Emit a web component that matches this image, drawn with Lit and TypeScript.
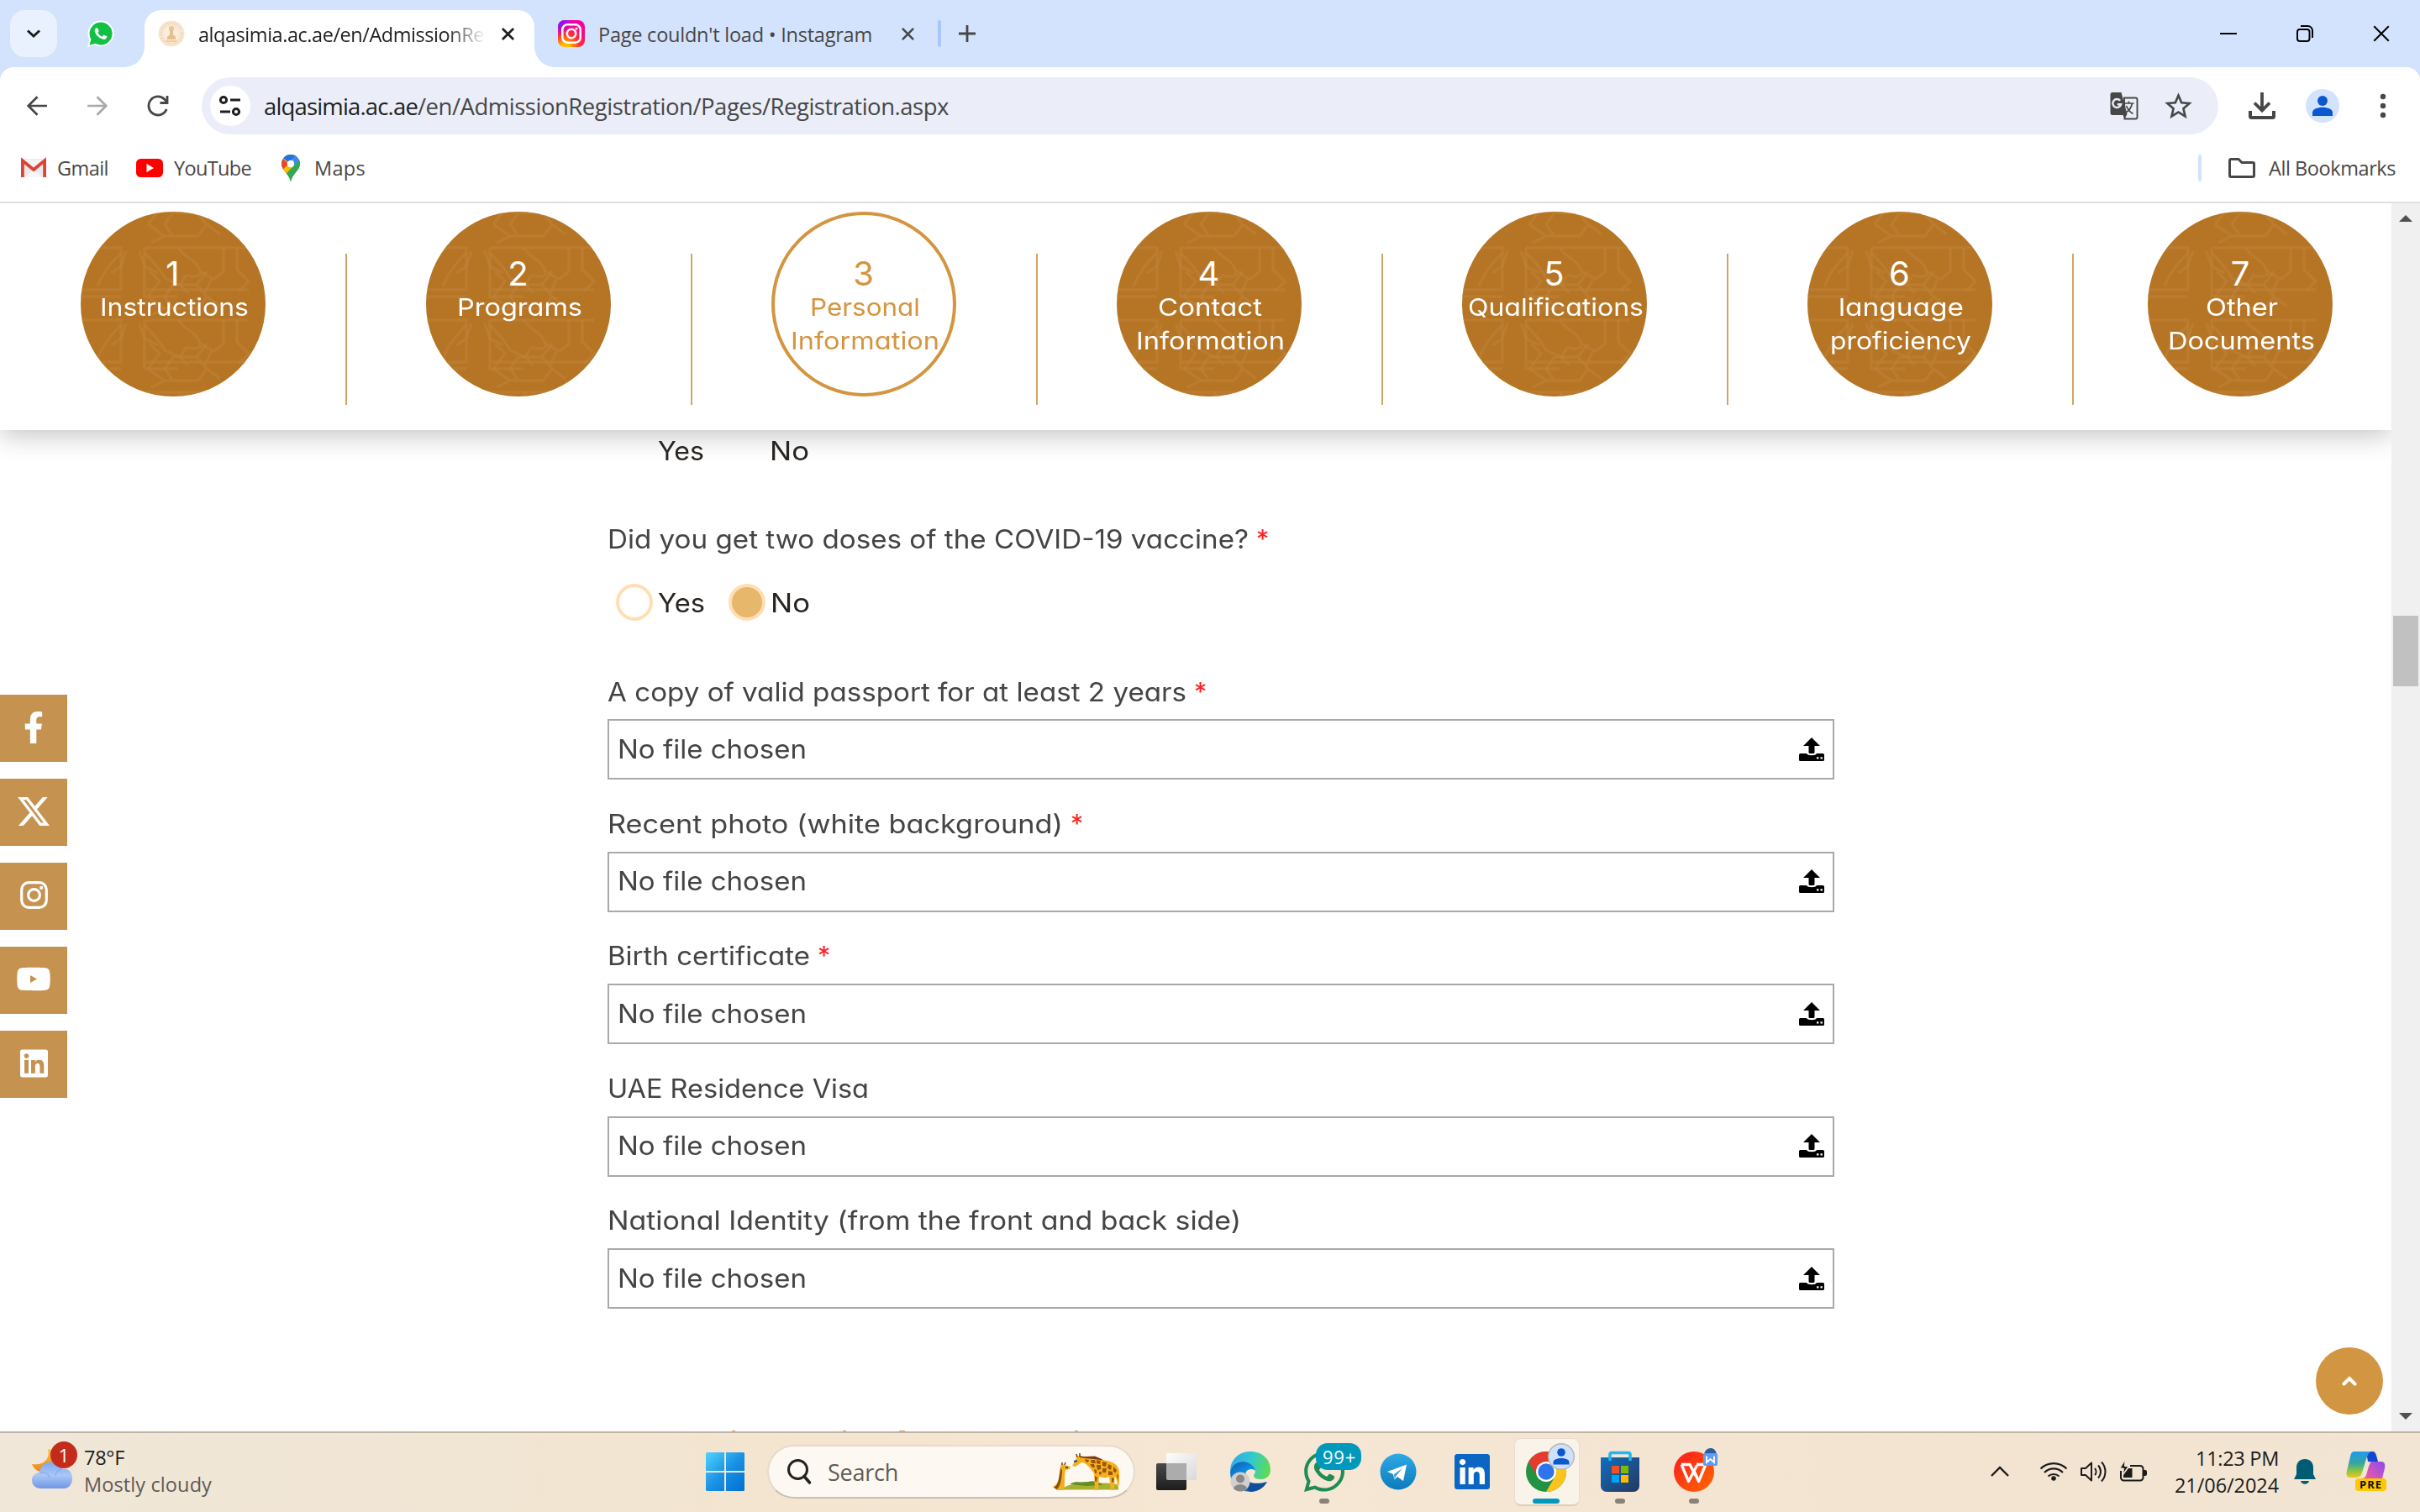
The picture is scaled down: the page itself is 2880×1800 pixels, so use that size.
import { LitElement, html, css, svg, nothing } from "lit";
import { customElement, property } from "lit/decorators.js";

/** One line of text that fills a given width, by tracking or by widening its letters. */
@customElement("fit-text")
class FitText extends LitElement {
  @property({ type: Number }) w = 0;
  @property() text = "";
  @property({ type: Boolean }) wide = false;
  static styles = css`
    :host { display: inline-block; white-space: pre; flex: none; }
    .line { display: inline-block; transform-origin: 0 50%; }
  `;
  render() {
    return html`<span class="line">${this.text}</span>`;
  }
  updated() {
    const line = this.renderRoot.querySelector(".line") as HTMLElement;
    line.style.letterSpacing = "0px";
    line.style.transform = "none";
    const natural = line.getBoundingClientRect().width;
    if (this.wide) {
      line.style.transform = `scaleX(${(this.w / natural).toFixed(4)})`;
    } else {
      line.style.letterSpacing = ((this.w - natural) / this.text.length).toFixed(3) + "px";
    }
    this.style.width = this.w + "px";
  }
}

const WHATSAPP_RING = "M380.9 97.1C339 55.1 283.2 32 223.9 32c-122.4 0-222 99.6-222 222 0 39.1 10.2 77.3 29.6 111L0 480l117.7-30.9c32.4 17.7 68.9 27 106.1 27h.1c122.3 0 224.1-99.6 224.1-222 0-59.3-25.2-115-67.1-157z";
const WHATSAPP_HOLE = "M223.9 438.7c-33.2 0-65.7-8.9-94-25.7l-6.7-4-69.8 18.3L72 359.2l-4.4-7c-18.5-29.4-28.2-63.3-28.2-98.2 0-101.7 82.8-184.5 184.6-184.5 49.3 0 95.6 19.2 130.4 54.1 34.8 34.9 56.2 81.2 56.1 130.5 0 101.8-84.9 184.6-186.6 184.6z";
const WHATSAPP_PHONE = "M325.1 300.5c-5.5-2.8-32.8-16.2-37.9-18-5.1-1.9-8.8-2.8-12.5 2.8-3.7 5.6-14.3 18-17.6 21.8-3.2 3.7-6.5 4.2-12 1.4-32.6-16.3-54-29.1-75.5-66-5.7-9.8 5.7-9.1 16.3-30.3 1.8-3.7.9-6.9-.5-9.7-1.4-2.8-12.5-30.1-17.1-41.2-4.5-10.8-9.1-9.3-12.5-9.5-3.2-.2-6.9-.2-10.6-.2-3.7 0-9.7 1.4-14.8 6.9-5.1 5.6-19.4 19-19.4 46.3 0 27.3 19.9 53.7 22.6 57.4 2.8 3.7 39.1 59.7 94.8 83.8 35.2 15.2 49 16.5 66.6 13.9 10.7-1.6 32.8-13.4 37.4-26.4 4.6-13 4.6-24.1 3.2-26.4-1.3-2.5-5-3.9-10.5-6.6z";
const LINKEDIN = "M416 32H31.9C14.3 32 0 46.5 0 64.3v383.4C0 465.5 14.3 480 31.9 480H416c17.6 0 32-14.5 32-32.3V64.3c0-17.8-14.4-32.3-32-32.3zM135.4 416H69V202.2h66.5V416zm-33.2-243c-21.3 0-38.5-17.3-38.5-38.5S80.9 96 102.2 96c21.2 0 38.5 17.3 38.5 38.5 0 21.3-17.2 38.5-38.5 38.5zm282.1 243h-66.4V312c0-24.8-.5-56.7-34.5-56.7-34.6 0-39.9 27-39.9 54.9V416h-66.4V202.2h63.7v29.2h.9c8.9-16.8 30.6-34.5 62.9-34.5 67.2 0 79.7 44.3 79.7 101.9V416z";

const icon = (w: number, h: number, box: string, body: unknown) =>
  html`<svg class="ic" width=${w} height=${h} viewBox=${box} fill="none">${body}</svg>`;

const closeX = (size: number, color: string, sw: number) =>
  icon(size, size, "0 0 16 16", svg`<path d="M1 1L15 15M15 1L1 15" stroke=${color} stroke-width=${sw}/>`);

/* ---------- browser icons ---------- */
const icons = {
  whatsappTab: icon(32, 34, "-24 8 496 496", svg`<path d=${WHATSAPP_RING} fill="#fff" stroke="#fff" stroke-width="36"/><path d=${WHATSAPP_RING} fill="#12c143" transform="translate(14 16) scale(.94)"/><path d=${WHATSAPP_PHONE} fill="#fff"/>`),
  seal: icon(32, 32, "0 0 32 32", svg`<circle cx="16" cy="16" r="15.5" fill="#f8e7d3"/><circle cx="16" cy="16" r="12.5" stroke="#f3dabb" stroke-width="3" stroke-dasharray="2 1.6"/><circle cx="16" cy="16" r="9" fill="#faeddd"/><circle cx="16" cy="10" r="3" fill="#e9c599"/><path d="M14 12h4v5l3 3v3H11v-3l3-3z" fill="#e6bf8e"/><path d="M9 25h14" stroke="#edcba3" stroke-width="2"/>`),
  instagramTab: icon(32, 32, "0 0 32 32", svg`
    <defs><radialGradient id="iga" cx=".28" cy="1.05" r="1.05"><stop offset="0" stop-color="#ffd600"/><stop offset=".2" stop-color="#ffb000"/><stop offset=".48" stop-color="#ff3a2a"/><stop offset=".75" stop-color="#ff0a78"/><stop offset="1" stop-color="#f400a8"/></radialGradient>
    <radialGradient id="igb" cx="0" cy="0" r=".6"><stop offset="0" stop-color="#5a1cff"/><stop offset=".5" stop-color="#9a10ff" stop-opacity=".8"/><stop offset="1" stop-color="#d300c5" stop-opacity="0"/></radialGradient></defs>
    <rect width="32" height="32" rx="8" fill="url(#iga)"/><rect width="32" height="32" rx="8" fill="url(#igb)"/>
    <rect x="5.3" y="5.3" width="21.4" height="21.4" rx="6" stroke="#fff" stroke-width="2.6"/><circle cx="16" cy="16" r="5.2" stroke="#fff" stroke-width="2.6"/><circle cx="22" cy="10" r="1.6" fill="#fff"/>`),
  back: icon(26, 26, "0 0 26 26", svg`<path d="M25 13H3M13.5 2.200L2.700 13L13.500 23.800" stroke="#474747" stroke-width="2.700"/>`),
  forward: icon(26, 26, "0 0 26 26", svg`<path d="M1 13H23M12.500 2.200L23.300 13L12.500 23.800" stroke="#a9a9a9" stroke-width="2.700"/>`),
  reload: icon(28, 28, "0 0 28 28", svg`<path d="M24.2 18A11 11 0 1 1 21.8 6.2L24 8.8" stroke="#474747" stroke-width="2.8"/><path d="M25 2V10.5H16.5" stroke="#474747" stroke-width="2.8"/>`),
  tune: icon(28, 24, "0 0 28 24", svg`<g stroke="#1f1f1f" stroke-width="3"><circle cx="6" cy="5" r="3.6"/><path d="M14 5H26M2 19H14"/><circle cx="21" cy="19" r="3.6"/></g>`),
  translate: icon(34, 34, "0 0 34 34", svg`<path d="M17 7.5H30.5a2 2 0 0 1 2 2V30.500a2 2 0 0 1-2 2H17.500z" stroke="#474747" stroke-width="1.900"/><path d="M3 1H13.500L20.500 27L17.500 32L15.500 28H3a2.500 2.500 0 0 1-2.500-2.500V3.500A2.500 2.500 0 0 1 3 1z" fill="#474747"/><path d="M17 14H28.500M22.500 11.500V14M26.500 14C25.500 19 22 23.500 18 25.500M19.500 17C21 21 24 24.500 27.500 26.500" stroke="#474747" stroke-width="1.700"/><path d="M12.200 10.800A5 5 0 1 0 13.200 15.200H8.800" stroke="#ebeef8" stroke-width="2.400"/>`),
  star: icon(39, 39, "0 0 24 24", svg`<path d="M22 9.240l-7.190-.620L12 2 9.190 8.630 2 9.240l5.460 4.730L5.820 21 12 17.270 18.180 21l-1.630-7.030L22 9.240zM12 15.400l-3.760 2.270 1-4.280-3.320-2.880 4.380-.380L12 6.100l1.710 4.040 4.380.380-3.320 2.880 1 4.280L12 15.400z" fill="#474747"/>`),
  download: icon(32, 32, "0 0 32 32", svg`<path d="M16 0V21M7 12.500L16 21.500L25 12.500" stroke="#474747" stroke-width="3.800"/><path d="M2 22V28.500a1.500 1.500 0 0 0 1.500 1.500H28.500a1.500 1.500 0 0 0 1.500-1.500V22" stroke="#474747" stroke-width="4"/>`),
  profile: icon(40, 40, "0 0 40 40", svg`<circle cx="20" cy="20" r="20" fill="#d3e3fd"/><circle cx="20" cy="14" r="6" fill="#0b57d0"/><path d="M8 32V28C8 19.500 32 19.500 32 28V32z" fill="#0b57d0"/>`),
  dots: icon(8, 30, "0 0 8 30", svg`<g fill="#474747"><circle cx="4" cy="4" r="3.200"/><circle cx="4" cy="15" r="3.200"/><circle cx="4" cy="26" r="3.200"/></g>`),
  gmail: icon(30, 22, "0 0 30 22", svg`<rect width="30" height="22" rx="2" fill="#e9e9e9"/><path d="M4 22L15 12L26 22z" fill="#f7f7f7"/><path d="M3 1L15 11L27 1z" fill="#f5f5f5"/><path d="M1.900 22V2.200L15 13L28.100 2.200V22" stroke="#db4437" stroke-width="3.800"/>`),
  youtube: icon(32, 22, "0 0 32 22", svg`<rect width="32" height="22" rx="5.500" fill="#f00"/><path d="M12.500 6L21 11L12.500 16z" fill="#fff"/>`),
  maps: icon(22, 32, "0 0 22 32", svg`
    <defs><clipPath id="pin"><path d="M11 0A11 11 0 0 1 22 11C22 19 14 21 11 32C8 21 0 19 0 11A11 11 0 0 1 11 0z"/></clipPath></defs>
    <g clip-path="url(#pin)"><rect width="22" height="32" fill="#34a853"/><path d="M-2 22L11 8L24 -8H-4z" fill="#fbbc04"/><path d="M-3 -3H8L2 5L9 12L2 18L-4 12z" fill="#ea4335"/><path d="M2 4L9 10L18 0L6 -3z" fill="#1a73e8"/><path d="M8 10L17.500 0L24 10L14 14z" fill="#4285f4"/><path d="M-2 21L14 6L15 13L4 26z" fill="#fbbc04"/><path d="M4 24L22 6V32H4z" fill="#34a853"/></g><circle cx="11" cy="11" r="4.200" fill="#fff"/>`),
  folder: icon(32, 24, "0 0 32 24", svg`<path d="M3 1.500H12L16 5.500H29a1.500 1.500 0 0 1 1.500 1.500V21a1.500 1.500 0 0 1-1.500 1.500H3A1.500 1.500 0 0 1 1.500 21V3A1.500 1.500 0 0 1 3 1.500z" stroke="#474747" stroke-width="3"/>`),
  restore: icon(20, 20, "0 0 20 20", svg`<rect x="1" y="5" width="14.500" height="14" rx="3" stroke="#000" stroke-width="2"/><path d="M5 1H13.500A5.500 5.500 0 0 1 19 6.500V15" stroke="#000" stroke-width="2"/>`),
  upload: icon(30, 28, "0 0 30 28", svg`<path d="M15 0L25 10H18.500V17.500a1.500 1.500 0 0 1-1.500 1.500H13a1.500 1.500 0 0 1-1.500-1.500V10H5z" fill="#000"/><path fill-rule="evenodd" d="M1.500 19H9C10 22 20 22 21 19H28.500A1.500 1.500 0 0 1 30 20.500V26.500A1.500 1.500 0 0 1 28.500 28H1.500A1.500 1.500 0 0 1 0 26.500V20.500A1.500 1.500 0 0 1 1.500 19zM21 23.200v2.400h2.400v-2.400zM25.500 23.200v2.400h2.400v-2.400z" fill="#000"/>`),
};

/* ---------- side strip ---------- */
const socials = [
  icon(24, 38, "0 0 320 512", svg`<path fill="#fff" d="M279.140 288l14.220-92.660h-88.910v-60.130c0-25.350 12.420-50.060 52.240-50.060h40.420V6.260S260.430 0 225.360 0c-73.220 0-121.080 44.380-121.080 124.720v70.620H22.890V288h81.390v224h100.170V288z"/>`),
  icon(42, 42, "0 0 512 512", svg`<path fill="#fff" d="M389.200 48h70.600L305.600 224.200 487 464H345L233.700 318.600 106.500 464H35.800L200.700 275.500 26.800 48H172.400L272.900 180.900 389.200 48zM364.400 421.800h39.100L151.100 88h-42L364.400 421.800z"/>`),
  icon(33, 33, "0 0 33 33", svg`<rect x="1.700" y="1.700" width="29.600" height="29.600" rx="8.500" stroke="#fff" stroke-width="3.200"/><circle cx="16.500" cy="16.500" r="6.900" stroke="#fff" stroke-width="3.200"/><circle cx="25.200" cy="7.900" r="2.100" fill="#fff"/>`),
  icon(42, 37, "0 0 576 512", svg`<path fill="#fff" d="M549.655 124.083c-6.281-23.650-24.787-42.276-48.284-48.597C458.781 64 288 64 288 64S117.220 64 74.629 75.486c-23.497 6.322-42.003 24.947-48.284 48.597-11.412 42.867-11.412 132.305-11.412 132.305s0 89.438 11.412 132.305c6.281 23.650 24.787 41.500 48.284 47.821C117.220 448 288 448 288 448s170.780 0 213.371-11.486c23.497-6.321 42.003-24.171 48.284-47.821 11.412-42.867 11.412-132.305 11.412-132.305s0-89.438-11.412-132.305zm-317.510 193.508V195.185l112.739 61.205-112.739 61.201z"/>`),
  icon(33, 38, "0 0 448 512", svg`<path fill="#fff" d=${LINKEDIN} />`),
];

/* ---------- taskbar icons ---------- */
const giraffes = icon(84, 44, "0 0 84 44", svg`
  <path d="M10 43C18 36 26 38 30 36C40 32 46 36 52 35C62 36 72 35 78 38V43.500H10z" fill="#a9b02f"/>
  <path d="M20 37C28 32 34 36 42 34C48 32 54 34 60 38L40 39z" fill="#5f8f22"/>
  <path d="M0 40C8 37 7 26 9 16L10 13L14 14L21 16L20 19L15 20C13 28 15 36 13 44H5z" fill="#f3ae1b"/>
  <path d="M1 41C8 37 7 27 9.500 17L11 21C10.500 29 10 37 5 43z" fill="#8a4f12"/>
  <path d="M23 15L28 6L30 3L34 3.500C44 5 54 3 58 8C71 9 80 14 79 25C79 32 80 36 77 41C77 33 75 28 73.500 28L73 44H69L67 28C63 30 59 29 55 28L54 44H50L49 24C44 17 39 11 34 11L27 16z" fill="#f6b01c"/>
  <path d="M31 3C38 5 44 3.500 50 3.500L58 7L60 8.500C50 6.500 42 7 32 5z" fill="#7a3d10"/>
  <g fill="#9a5510"><path d="M38 7l5 1-1 3-3-1zM45 8l5 0 1 4-5 0zM52 8l5 1-1 4-4-1zM44 13l5 0 1 4-3 0zM52 14l5 0 0 5-4 1zM59 10l5 1-1 5-4-1zM59 18l5 0-1 5-4 0zM66 13l4 2-1 5-4-2zM66 21l5 1 0 4-5 0zM72 16l4 4-1 3-3-1zM49 19l3 1 0 4-2 0zM55 22l3 0-1 4-2-1zM50 27l3 2-1 5-2-1zM70 29l3 1-1 5-2-1zM76 24l2 3-1 6z"/></g>
  <path d="M28 1L29 5M32 0L32 4M11 11L11 14M15 11L14 14" stroke="#7a3d10" stroke-width="1.500"/>
  <path d="M25 10l4-1M15 17l3 0" stroke="#1a4b9a" stroke-width="2"/>`);

const windowsLogo = icon(46, 46, "0 0 46 46", svg`<defs><linearGradient id="win" x1="0" y1="0" x2="46" y2="46" gradientUnits="userSpaceOnUse"><stop stop-color="#4fd4ff"/><stop offset=".500" stop-color="#1a92e4"/><stop offset="1" stop-color="#006fd0"/></linearGradient></defs><g fill="url(#win)"><path d="M1.500 0H22V22H0V1.500A1.500 1.500 0 0 1 1.500 0z"/><path d="M24 0H44.500A1.500 1.500 0 0 1 46 1.500V22H24z"/><path d="M0 24H22V46H1.500A1.500 1.500 0 0 1 0 44.500z"/><path d="M24 24H46V44.500A1.500 1.500 0 0 1 44.500 46H24z"/></g>`);

const taskView = icon(48, 48, "0 0 48 48", svg`<defs><linearGradient id="tv1" x1="0" y1="0" x2="1" y2="1"><stop stop-color="#fdfdfd"/><stop offset="1" stop-color="#d9d9db"/></linearGradient><linearGradient id="tv2" x1="0" y1="0" x2="0" y2="1"><stop stop-color="#4a4a4a"/><stop offset="1" stop-color="#1c1c1c"/></linearGradient></defs><rect x="12" y="2" width="36" height="32" rx="2" fill="url(#tv1)"/><rect y="14" width="36" height="32" rx="2" fill="url(#tv2)"/><path d="M12 14H34a2 2 0 0 1 2 2V34H14a2 2 0 0 1-2-2z" fill="#acacac"/>`);

const edge = icon(48, 48, "0 0 48 48", svg`<defs><linearGradient id="e1" x1="0" y1=".300" x2="1" y2=".500"><stop stop-color="#2fa8ee"/><stop offset=".500" stop-color="#33c8cf"/><stop offset="1" stop-color="#5fdc52"/></linearGradient><linearGradient id="e2" x1="0" y1="0" x2=".600" y2="1"><stop stop-color="#0c5bb0"/><stop offset=".500" stop-color="#1190e0"/><stop offset="1" stop-color="#0f66b8"/></linearGradient></defs>
  <path d="M0 24C0 10 10 0 24 0S48 9 48 22C48 29 43 33 37 33C31 33 28 31 28 29C28 27 30 26 30 23C30 18 24 12 15 12C8 12 2 16 0 24z" fill="url(#e1)"/>
  <path d="M0 24C2 16 8 12 15 12C24 12 30 18 30 23C28 20 18 19 18 29C18 38 26 45 34 45C24 51 0 48 0 24z" fill="url(#e2)"/>
  <path d="M19 26C16 38 30 40 44 36C40 44 32 48 24 48C16 44 14 32 19 26z" fill="#0f4c9a"/>
  <circle cx="12" cy="36" r="11.500" fill="#d0d0ce"/><circle cx="12" cy="32.500" r="5" fill="#8a8886"/><path d="M4 44C5 37.500 19 37.500 20 44C16 48.500 8 48.500 4 44z" fill="#8a8886"/>`);

const whatsappTask = icon(48, 48, "0 32 448 448", svg`<path d=${WHATSAPP_RING + WHATSAPP_HOLE} fill-rule="evenodd" fill="#1f8b56"/><path d=${WHATSAPP_PHONE} fill="#1f8b56"/>`);

const telegram = icon(44, 44, "0 0 44 44", svg`<defs><linearGradient id="tg" x1="0" y1="0" x2="0" y2="1"><stop stop-color="#2fa9e6"/><stop offset="1" stop-color="#0c7bbb"/></linearGradient></defs><circle cx="22" cy="22" r="21.500" fill="url(#tg)"/><path d="M9 22L32 13.500L28 33L21 28L17.500 31.500L16 25z" fill="#fff"/><path d="M17 25L27 18L19.500 27L17.500 31z" fill="#3d9fd4"/>`);

const linkedinTask = icon(42, 42, "0 32 448 448", svg`<rect x="30" y="60" width="390" height="390" fill="#fff"/><path d=${LINKEDIN} fill="#0a66c2"/>`);

const chrome = icon(48, 48, "0 0 48 48", svg`<circle cx="24" cy="24" r="24" fill="#229342"/><path d="M3.200 12A24 24 0 0 1 44.800 12H24L13.600 30z" fill="#e33b2e"/><path d="M44.800 12A24 24 0 0 1 24 48L34.400 30L24 12z" fill="#fcc31e"/><circle cx="24" cy="24" r="12" fill="#fff"/><circle cx="24" cy="24" r="9.700" fill="#2f74ec"/>`);
const chromeBadge = icon(32, 32, "0 0 32 32", svg`<circle cx="16" cy="16" r="15.300" fill="#cfe0fc" stroke="#b5b5b0" stroke-width="1.400"/><circle cx="16" cy="11" r="4.800" fill="#0b57d0"/><path d="M6.500 25.500V22.500C6.500 16.500 25.500 16.500 25.500 22.500V25.500z" fill="#0b57d0"/>`);

const store = icon(46, 48, "0 0 46 48", svg`<defs><linearGradient id="st" x1="0" y1="0" x2="1" y2="1"><stop stop-color="#0f6fbf"/><stop offset="1" stop-color="#26375f"/></linearGradient></defs><path d="M0 7H46V41a7 7 0 0 1-7 7H7a7 7 0 0 1-7-7z" fill="url(#st)"/><path d="M11 11V3.500A2 2 0 0 1 13 1.500H33A2 2 0 0 1 35 3.500V11" stroke="#1fb6f2" stroke-width="3.600"/><rect x="13" y="17" width="9" height="9" fill="#f25022"/><rect x="24" y="17" width="9" height="9" fill="#7fba00"/><rect x="13" y="28" width="9" height="9" fill="#00a4ef"/><rect x="24" y="28" width="9" height="9" fill="#ffb900"/>`);

const wps = icon(48, 48, "0 0 48 48", svg`<defs><linearGradient id="wp" x1="0" y1="0" x2="1" y2="1"><stop stop-color="#fb1a1e"/><stop offset="1" stop-color="#ff6a00"/></linearGradient></defs><circle cx="24" cy="24" r="24" fill="url(#wp)"/><path d="M9 15.500H19L26 29M9 15.500L17.500 35.500L27.500 16.500M24 23L29.500 35.500L38 15.500H27" stroke="#fff" stroke-width="3.300" stroke-linejoin="round"/>`);
const wpsBadge = icon(17, 21, "0 0 17 21", svg`<path d="M1 8C2 -2 15 -3 16 8z" fill="#2a5f9a"/><rect y="6" width="17" height="15" rx="2" fill="#5f9bf8"/><path d="M4 9.500V17L8.500 13L13 17V9.500" stroke="#fff" stroke-width="1.900"/>`);

const weather = icon(52, 58, "0 0 52 58", svg`<defs><linearGradient id="cl" x1="0" y1="0" x2="0" y2="1"><stop stop-color="#7fa6ee"/><stop offset=".500" stop-color="#a9c7f7"/><stop offset="1" stop-color="#6f97e4"/></linearGradient><linearGradient id="mo" x1="0" y1="0" x2="0" y2="1"><stop stop-color="#f7c53a"/><stop offset="1" stop-color="#ee8420"/></linearGradient></defs><path d="M19 10C22 22 14 30 0 28C4 38 14 40 22 34L30 20C28 14 24 11 19 10z" fill="url(#mo)"/><path d="M9.500 57A9.500 9.500 0 0 1 0 47C0 42 4 38.500 9 38C11 22 32 22 36 34C44 33 48 38 48 45C48 52 44 57 38 57z" fill="url(#cl)"/><path d="M9 38C16 37 20 40 21 44M36 34C31 35 28 38 28 42" stroke="#7da3ec" stroke-opacity=".600" stroke-width="1.500"/>`);

const tray = {
  up: icon(22, 13, "0 0 22 13", svg`<path d="M1 12L11 2L21 12" stroke="#1b1b1b" stroke-width="2.400"/>`),
  wifi: icon(34, 26, "0 0 34 26", svg`<g stroke="#1b1b1b" stroke-width="2.100"><path d="M1.500 9.500A22 22 0 0 1 32.500 9.500M6 14A15.500 15.500 0 0 1 28 14M10.500 18.500A9.500 9.500 0 0 1 23.500 18.500"/></g><circle cx="17" cy="21" r="2.800" fill="#1b1b1b"/>`),
  sound: icon(34, 28, "0 0 34 28", svg`<g stroke="#1b1b1b" stroke-width="2"><path d="M2 10H7L14 3.500V24.500L7 18H2z" stroke-linejoin="round"/><path d="M18 10A6 6 0 0 1 18 18M22 6.500A11 11 0 0 1 22 21.500M26 2.500A17 17 0 0 1 26 25.500"/></g>`),
  battery: icon(32, 27, "0 0 32 27", svg`<path d="M12 7H24a3.500 3.500 0 0 1 3.500 3.500V21a3.500 3.500 0 0 1-3.500 3.500H4.500A3.500 3.500 0 0 1 1 21V13" stroke="#1b1b1b" stroke-width="2"/><path d="M28 12h2a2 2 0 0 1 2 2v3a2 2 0 0 1-2 2h-2z" fill="#1b1b1b"/><path d="M4 21V18L10 10H14.500V21z" fill="#1b1b1b"/><path d="M6 0L0 10H4.500L3.500 17L10 7.500H5.500z" fill="#1b1b1b" stroke="#f3e5d3" stroke-width="1"/>`),
  bell: icon(26, 30, "0 0 26 30", svg`<path d="M13 0C19 0 23 4 23 10V18L26 24H0L3 18V10C3 4 7 0 13 0z" fill="#005b75"/><path d="M8 26H18C17 31 9 31 8 26z" fill="#005b75"/>`),
  copilot: icon(48, 48, "0 0 48 48", svg`<defs><linearGradient id="c1" x1="0" y1="0" x2="0" y2="1"><stop stop-color="#1f9bf0"/><stop offset=".450" stop-color="#35a6a0"/><stop offset=".750" stop-color="#8cc63f"/><stop offset="1" stop-color="#f2c419"/></linearGradient><linearGradient id="c2" x1="1" y1="0" x2="0" y2="1"><stop stop-color="#8a4df0"/><stop offset=".500" stop-color="#d955b5"/><stop offset="1" stop-color="#ff7a4a"/></linearGradient></defs><path d="M24 0H32C35 0 36 4 38 12H26z" fill="#1146d0"/><path d="M10 0H30C25 2 24 10 20 22C18 28 18 30 12 31H5C0 31 0 27 1 23L5 6C6 2 7 0 10 0z" fill="url(#c1)"/><path d="M30 12H42C46 12 47 16 46 20L42 36C41 41 38 43 35 43H12C18 40 20 33 22 28C25 18 25 14 30 12z" fill="url(#c2)"/><path d="M27 13.500C24 16 22 26 19.500 31H22.500C25.500 26 26 17 29.500 13z" fill="#f3e5d3"/>`),
};

interface Step { n: number; lines: [string, number][]; active?: boolean }
const steps: Step[] = [
  { n: 1, lines: [["Instructions", 177]] },
  { n: 2, lines: [["Programs", 149]] },
  { n: 3, lines: [["Personal", 131], ["Information", 177]], active: true },
  { n: 4, lines: [["Contact", 124], ["Information", 177]] },
  { n: 5, lines: [["Qualifications", 209]] },
  { n: 6, lines: [["language", 149], ["proficiency", 168]] },
  { n: 7, lines: [["Other", 86], ["Documents", 175]] },
];

interface Upload { label: string; w: number; required: boolean }
const uploads: Upload[] = [
  { label: "A copy of valid passport for at least 2 years", w: 689, required: true },
  { label: "Recent photo (white background)", w: 542, required: true },
  { label: "Birth certificate", w: 241, required: true },
  { label: "UAE Residence Visa", w: 311, required: false },
  { label: "National Identity (from the front and back side)", w: 754, required: false },
];

/* Faint girih lines behind the step discs. */
const disc = html`<svg class="disc" width="220" height="220" viewBox="0 0 220 220" fill="none">
  <defs>
    <g id="star" stroke="#bf8138" stroke-opacity=".55" stroke-width="3.500">
      <path d="M0 0H48V50H-20M76 0H200M76 0V50H200M0 50V58H48M76 50V58H116"/>
      <path d="M48 6C40 14 28 26 20 46M76 6C84 14 96 28 100 36L118 44M54 4L48 22L36 30M70 4L76 22L92 30"/>
      <path d="M116 0C124 12 138 14 142 28C146 34 132 36 126 32M126 32L118 44L128 54M142 28L156 36L148 54M170 0V28L158 38M186 0V26L200 40L188 52"/>
      <path d="M80 -28L100 -14H140M80 -28L94 -46L82 -58M100 -14L84 -6M140 -14L150 -28L138 -42H110L100 -28L110 -14M150 -28L166 -16M138 -42L150 -58"/>
    </g>
  </defs>
  <clipPath id="disc"><circle cx="110" cy="110" r="110"/></clipPath>
  <g clip-path="url(#disc)"><rect width="220" height="220" fill="#b57525"/>
    <use href="#star" x="0" y="43"/><use href="#star" x="0" y="129"/><use href="#star" x="0" y="215"/>
  </g>
</svg>`;

@customElement("app-root")
class AppRoot extends LitElement {
  static styles = css`
    :host { display: block; width: 2880px; height: 1800px; overflow: hidden; background: #fff; font-family: "Open Sans", "Noto Sans", sans-serif; font-size: 23.5px; color: #474747; }
    * { box-sizing: border-box; }
    .ic, .disc { display: block; flex: none; overflow: visible; }
    .row { display: flex; align-items: center; }

    .tabs { height: 80px; background: #d3e3fd; display: flex; align-items: flex-start; padding: 12px 36px 0 12px; }
    .menu { width: 56px; height: 56px; border-radius: 18px; background: #eaf1fe; display: flex; align-items: center; justify-content: center; }
    .pinned { width: 104px; height: 56px; display: flex; align-items: center; justify-content: center; }
    .tab { width: 464px; height: 68px; background: #fff; border-radius: 20px 20px 0 0; display: flex; padding: 0 24px 12px 16px; align-items: center; position: relative; color: #1f1f1f; }
    .tab::before, .tab::after { content: ""; position: absolute; bottom: 0; width: 24px; height: 24px; }
    .tab::before { left: -24px; background: radial-gradient(circle at 0 0, transparent 23.5px, #fff 24px); }
    .tab::after { right: -24px; background: radial-gradient(circle at 100% 0, transparent 23.5px, #fff 24px); }
    .tab .title { margin-left: 16px; width: 345px; -webkit-mask-image: linear-gradient(90deg, #000 295px, transparent 342px); mask-image: linear-gradient(90deg, #000 295px, transparent 342px); }
    .tab .title, .idle .title { line-height: 40px; height: 40px; padding-top: 1px; }
    .tab .ic:last-child { margin-left: 16px; }
    .idle { height: 56px; padding-left: 28px; }
    .idle .title { margin: 0 35px 0 16px; }
    .split { width: 4px; height: 32px; border-radius: 2px; background: #a8c7fa; margin: 0 21px 0 28px; }
    .winctl { margin-left: auto; height: 56px; gap: 71px; }

    .chrome { background: #d3e3fd; height: 160px; }
    .chromein { background: #fff; border-radius: 16px 16px 0 0; height: 160px; padding-top: 12px; }
    .bar { height: 68px; padding: 0 40px 0 31px; }
    .bar > .ic:nth-child(2) { margin-left: 46px; }
    .bar > .ic:nth-child(3) { margin-left: 45px; }
    .omni { margin-left: 38px; width: 2400px; height: 68px; border-radius: 34px; background: #ebeef8; padding: 0 28px 0 10px; }
    .info { width: 48px; height: 48px; border-radius: 50%; background: #fff; display: flex; align-items: center; justify-content: center; margin-right: 16px; }
    .url { font-size: 27.5px; line-height: 48px; height: 48px; padding-top: 1px; }
    .host { color: #1f1f1f; }
    .omniend { margin-left: auto; gap: 28px; }
    .end { margin-left: 36px; }
    .end .ic:nth-child(2) { margin-left: 36px; }
    .end .ic:nth-child(3) { margin-left: 48px; }
    .marks { height: 80px; padding: 0 29px 0 25px; line-height: 40px; }
    .marks fit-text { margin-left: 13px; margin-top: -1px; }
    .marks .yt { margin-left: 33px; }
    .marks .mp { margin-left: 36px; }
    .marks .mp + fit-text { margin-left: 17px; }
    .marksend { margin-left: auto; }
    .marksend i { width: 4px; height: 32px; border-radius: 2px; background: #d3e3fd; margin-right: 32px; }
    .marksend fit-text { margin-left: 16px; }

    .page { height: 1464px; border-top: 2px solid #e0e0e0; display: flex; position: relative; font-family: Inter, "Open Sans", sans-serif; font-feature-settings: "cv11", "ss03"; overflow: hidden; }
    .view { flex: 1; min-width: 0; overflow: hidden; position: relative; }
    .steps { height: 270px; display: flex; background: #fff; box-shadow: 0 6px 30px rgba(0, 0, 0, .24); position: relative; }
    .step { width: 411px; padding-top: 10px; display: flex; justify-content: center; position: relative; flex: none; }
    .step:not(:last-child)::after { content: ""; position: absolute; right: -2px; top: 60px; width: 2px; height: 180px; background: #d3a466; }
    .step:last-child { width: 400px; }
    .round { width: 220px; height: 220px; position: relative; color: #fff; }
    .round .disc { position: absolute; inset: 0; }
    .ring { border: 4px solid #d49540; border-radius: 50%; color: #d49540; }
    .face { position: absolute; left: -10px; right: -10px; top: 54px; display: flex; flex-direction: column; align-items: center; font-size: 29px; line-height: 40px; padding-left: 3px; }
    .ring .face { left: -14px; right: -14px; top: 50px; }
    .num { font-size: 40px; margin-left: -3px; }
    .num + fit-text { margin-top: -.5px; }

    .form { width: 1460px; margin-left: 723px; padding-top: 3px; font-size: 30.5px; color: #444; }
    .line { height: 44px; line-height: 44px; display: flex; align-items: center; white-space: pre; }
    .ghost, .opts { padding-left: 10px; color: #282421; height: 44px; line-height: 44px; display: flex; align-items: center; }
    .ghost { padding-left: 60px; }
    .ghost fit-text + fit-text { margin-left: 78px; }
    .ask { margin-top: 61px; }
    .opts { margin-top: 31px; margin-bottom: 63px; }
    .opts fit-text { margin-left: 6px; margin-right: -1px; padding-top: 1px; }
    .radio { width: 44px; height: 44px; border-radius: 50%; border: 4px solid #ffdfb1; background: #fff; flex: none; }
    .on { background: #e7b76b; margin-left: 29px; }
    .star { color: #f22; margin-left: 9px; font-size: 30.5px; }
    .field { height: 126px; margin-bottom: 31.6px; }
    .field + .field .line { position: relative; top: -1px; }
    .box { margin-top: 10px; height: 72px; border: 2px solid #a9a9a9; display: flex; align-items: center; justify-content: space-between; padding: 0 10px 1px; line-height: 44px; }

    .social { position: absolute; left: 0; top: 585px; display: flex; flex-direction: column; gap: 20px; }
    .social span { width: 80px; height: 80px; background: #c59250; display: flex; align-items: center; justify-content: center; padding-bottom: 3px; }
    .top { position: absolute; right: 10px; top: 1362px; width: 80px; height: 80px; border-radius: 50%; background: #d29541; display: flex; align-items: center; justify-content: center; }
    .peek { position: absolute; left: 871px; bottom: 0; display: flex; gap: 128px; }
    .peek i { width: 4px; height: 1px; background: #d6a35c; }
    .peek i:nth-child(3) { margin-left: -65px; width: 7px; }
    .peek i:nth-child(4) { margin-left: 74px; }

    .scroll { width: 34px; background: #f0f0f0; display: flex; flex-direction: column; align-items: center; padding: 14px 0; }
    .scroll b { width: 30px; height: 84px; background: #c1c1c1; margin-top: 469px; }
    .scroll .ic:last-child { margin-top: auto; }

    .task { height: 96px; border-top: 2px solid #beb5a8; background: linear-gradient(90deg, #f0e7d8 0, #f1e6d5 450px, #f3e5d0 900px, #f5e7d3 1500px, #f3e4d2 2400px, #f3e5d3 100%); display: flex; color: #1b1b1b; line-height: 32px; }
    .weather { width: 819px; padding: 9px 0 0 38px; display: flex; position: relative; }
    .badge { position: absolute; left: 60px; top: 10px; width: 32px; height: 32px; border-radius: 50%; background: #c42b1c; color: #fff; text-align: center; font-size: 22px; line-height: 32px; }
    .two { display: flex; flex-direction: column; }
    .weather .two { margin: 4px 0 0 10px; }
    .dim { color: #5d5a55; }
    .cell { width: 88px; height: 94px; display: flex; align-items: center; justify-content: center; position: relative; flex: none; padding-bottom: 2px; }
    .cell::after { content: ""; position: absolute; bottom: 10px; width: 12px; height: 6px; border-radius: 3px; }
    .run::after { background: #8a8178; }
    .live::after { background: #0099bc; width: 32px; }
    .live::before { content: ""; position: absolute; left: 6px; top: 6px; width: 76px; height: 78px; border-radius: 8px; background: #faf3ea; border: 1px solid #eaddcb; border-bottom: 2px solid #dccdb8; }
    .live .ic { position: relative; }
    .over { position: absolute; left: 46px; top: 12px; }
    .cell .wb { position: absolute; left: 55px; top: 18px; }
    .count { position: absolute; left: 34px; top: 12px; width: 54px; height: 32px; border-radius: 14px; background: #0099bc; color: #fff; font-size: 22px; line-height: 32px; text-align: center; padding-left: 2px; }
    .find { width: 438px; height: 64px; margin: 14px 5px 0 6px; border-radius: 32px; background: #fdf9f2; border: 2px solid #e6dacb; border-bottom-color: #cbc0ae; padding: 0 12px 0 22px; font-size: 27px; color: #5d5b58; }
    .find .text { margin: 2px auto 0 20px; }
    .sys { margin-left: auto; padding: 0 40px 2px 0; height: 94px; }
    .sys .ic { margin-top: -1px; }
    .wifi { margin-left: 36px; }
    .sound { margin-left: 14px; }
    .power { margin-left: 14px; }
    .clock { align-items: flex-end; margin-left: 33px; margin-right: 18px; }
    .clock fit-text { display: block; }
    .co { position: relative; margin-left: 36px; margin-top: 0; }
    .pre { position: absolute; left: 11px; top: 31px; width: 37px; height: 15px; border-radius: 4px; background: #ffc800; color: #111; font-size: 13px; font-weight: 700; line-height: 15px; text-align: center; letter-spacing: 1px; }
  `;

  private topBar() {
    return html`<div class="tabs">
        <div class="menu">${icon(16, 10, "0 0 16 10", svg`<path d="M1 1.500L8 8L15 1.500" stroke="#1f1f1f" stroke-width="3"/>`)}</div>
        <div class="pinned">${icons.whatsappTab}</div>
        <div class="tab">${icons.seal}<div class="title"><fit-text w="340" text="alqasimia.ac.ae/en/AdmissionRe"></fit-text></div>${closeX(15, "#1f1f1f", 2.9)}</div>
        <div class="row idle">${icons.instagramTab}<fit-text class="title" w="326" text="Page couldn't load • Instagram"></fit-text>${closeX(15, "#474747", 2.7)}<i class="split"></i>${icon(20, 20, "0 0 20 20", svg`<path d="M10 0V20M0 10H20" stroke="#474747" stroke-width="2.800"/>`)}</div>
        <div class="row winctl">${icon(20, 2, "0 0 20 2", svg`<rect width="20" height="2" fill="#000"/>`)}${icons.restore}${closeX(20, "#000", 1.6)}</div>
      </div>
      <div class="chrome"><div class="chromein">
        <div class="row bar">${icons.back}${icons.forward}${icons.reload}
          <div class="row omni"><span class="info">${icons.tune}</span>
            <fit-text class="url host" w="183" text="alqasimia.ac.ae"></fit-text><fit-text class="url" w="632" text="/en/AdmissionRegistration/Pages/Registration.aspx"></fit-text>
            <div class="row omniend">${icons.translate}${icons.star}</div></div>
          <div class="row end">${icons.download}${icons.profile}${icons.dots}</div></div>
        <div class="row marks">${icons.gmail}<fit-text w="61" text="Gmail"></fit-text>
          <span class="yt">${icons.youtube}</span><fit-text w="92" text="YouTube"></fit-text>
          <span class="mp">${icons.maps}</span><fit-text w="61" text="Maps"></fit-text>
          <div class="row marksend"><i></i>${icons.folder}<fit-text w="151" text="All Bookmarks"></fit-text></div></div>
      </div></div>`;
  }

  private page() {
    return html`<div class="page"><div class="view">
        <div class="steps">${steps.map((s) => html`<div class="step"><div class="round ${s.active ? "ring" : ""}">
          ${s.active ? nothing : disc}
          <div class="face"><span class="num">${s.n}</span>${s.lines.map(([t, w]) => html`<fit-text wide .w=${w} .text=${t}></fit-text>`)}</div></div></div>`)}</div>
        <div class="form">
          <div class="ghost"><fit-text wide w="55" text="Yes"></fit-text><fit-text wide w="47" text="No"></fit-text></div>
          <div class="line ask"><fit-text wide w="763" text="Did you get two doses of the COVID-19 vaccine?"></fit-text><span class="star">*</span></div>
          <div class="opts"><i class="radio"></i><fit-text wide w="56" text="Yes"></fit-text><i class="radio on"></i><fit-text wide w="47" text="No"></fit-text></div>
          ${uploads.map((u) => html`<div class="field"><div class="line"><fit-text wide .w=${u.w} .text=${u.label}></fit-text>${u.required ? html`<span class="star">*</span>` : nothing}</div>
            <div class="box"><fit-text wide w="225" text="No file chosen"></fit-text>${icons.upload}</div></div>`)}
        </div>
        <div class="peek"><i></i><i></i><i></i><i></i></div>
        <div class="social">${socials.map((s) => html`<span>${s}</span>`)}</div>
        <div class="top">${icon(18, 12, "0 0 18 12", svg`<path d="M2.500 9.500L9 3L15.500 9.500" stroke="#fff" stroke-width="4" stroke-linecap="round"/>`)}</div>
      </div>
      <div class="scroll">${icon(16, 8, "0 0 16 8", svg`<path d="M0 8L8 0L16 8z" fill="#505050"/>`)}<b></b>${icon(16, 8, "0 0 16 8", svg`<path d="M0 0L8 8L16 0z" fill="#505050"/>`)}</div>
    </div>`;
  }

  private taskbar() {
    return html`<div class="task">
      <div class="weather">${weather}<span class="badge">1</span><div class="two"><fit-text w="48" text="78°F"></fit-text><fit-text class="dim" w="152" text="Mostly cloudy"></fit-text></div></div>
      <div class="cell">${windowsLogo}</div>
      <div class="row find">${icon(28, 30, "0 0 28 30", svg`<circle cx="12.500" cy="12.500" r="11" stroke="#222" stroke-width="3"/><path d="M20 20.500L26.500 28" stroke="#222" stroke-width="3.600" stroke-linecap="round"/>`)}<fit-text class="text" w="84" text="Search"></fit-text>${giraffes}</div>
      <div class="cell">${taskView}</div>
      <div class="cell">${edge}</div>
      <div class="cell run">${whatsappTask}<span class="count"><fit-text w="40" text="99+"></fit-text></span></div>
      <div class="cell">${telegram}</div>
      <div class="cell">${linkedinTask}</div>
      <div class="cell live">${chrome}<span class="over">${chromeBadge}</span></div>
      <div class="cell run">${store}</div>
      <div class="cell run">${wps}<span class="wb">${wpsBadge}</span></div>
      <div class="row sys">${tray.up}<span class="wifi">${tray.wifi}</span><span class="sound">${tray.sound}</span><span class="power">${tray.battery}</span>
        <div class="two clock"><fit-text w="99" text="11:23 PM"></fit-text><fit-text w="124" text="21/06/2024"></fit-text></div>
        ${tray.bell}<div class="co">${tray.copilot}<span class="pre">PRE</span></div></div>
    </div>`;
  }

  render() {
    return html`${this.topBar()}${this.page()}${this.taskbar()}`;
  }
}
